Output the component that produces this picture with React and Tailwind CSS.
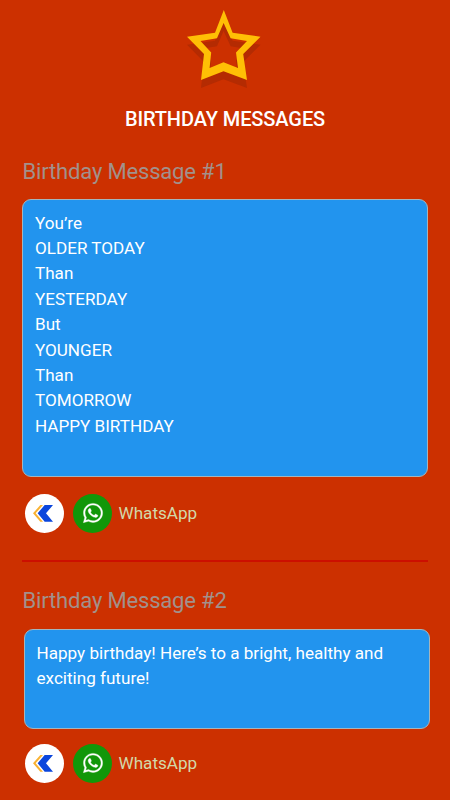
import React from 'react';
import { FaWhatsapp } from 'react-icons/fa';

const messages = [
  {
    id: 1,
    lines: [
      'You’re',
      'OLDER TODAY',
      'Than',
      'YESTERDAY',
      'But',
      'YOUNGER',
      'Than',
      'TOMORROW',
      'HAPPY BIRTHDAY',
    ],
    box: 'mt-[13px] h-[278px] pl-[12px] pt-[10.6px]',
    share: 'mt-[17px]',
  },
  {
    id: 2,
    lines: ['Happy birthday! Here’s to a bright, healthy and exciting future!'],
    box: 'ml-[2px] mt-[14px] h-[100px] pl-[11.5px] pt-[11px]',
    share: 'mt-[15px]',
  },
];

const star =
  'M36.8 0 L45.6 22.7 L73.5 26.7 L56.2 44 L60 70 L36.5 61.3 L14 70 L17 44 L0 26.7 L28 22.7 Z M36.6 13 L30 28.3 L13.5 31 L24.2 42.5 L22.6 58 L36.5 52.3 L51 58 L49 42.5 L60 31 L43.6 28.3 Z';

const StarLogo = () => (
  <svg width="74" height="79" viewBox="0 0 74 79" className="mr-[3px] block">
    <path d={star} transform="translate(0 8)" fill="#b42b02" fillRule="evenodd" />
    <path d={star} fill="#ffbf05" fillRule="evenodd" />
  </svg>
);

const ArrowIcon = () => (
  <svg width="39" height="39" viewBox="0 0 117 117">
    <path d="M24 58 L46 33 H54 L32 58 L54 83 H46 Z" fill="#f9b233" />
    <path d="M38 58 L59 33 H84 L63 58 L84 83 H59 Z" fill="#0b46dc" />
  </svg>
);

const ShareRow = ({ className }) => (
  <div className={`flex items-center pl-[3px] ${className}`}>
    <button className="h-[39px] w-[39px] rounded-full bg-white">
      <ArrowIcon />
    </button>
    <button className="ml-[9px] flex h-[39px] w-[39px] items-center justify-center rounded-full bg-[#129709] pb-[1px] text-white">
      <FaWhatsapp size={22} className="stroke-white stroke-[8px]" />
    </button>
    <span className="ml-[6.5px] text-[17.1px] leading-[25px] text-[#d3d9a9]">WhatsApp</span>
  </div>
);

const MessageCard = ({ message }) => (
  <section>
    <h2 className="pl-[0.5px] text-[22px] leading-7 tracking-[-0.17px] text-[#a2918b]">
      Birthday Message #{message.id}
    </h2>
    <div
      className={`w-[406px] rounded-[9px] border border-[#a3b5bd] bg-[#2294ee] pr-[11.5px] text-[17.1px] leading-[25.4px] text-white ${message.box}`}
    >
      {message.lines.map((line, i) => (
        <p key={i}>{line}</p>
      ))}
    </div>
    <ShareRow className={message.share} />
  </section>
);

export default function App() {
  return (
    <div className="h-[800px] w-[450px] overflow-hidden bg-[#cc3000] font-['Roboto',sans-serif]">
      <header className="flex flex-col items-center pt-[10px]">
        <StarLogo />
        <h1 className="mt-4 text-[20px] font-medium leading-7 tracking-[-0.1px] text-white">BIRTHDAY MESSAGES</h1>
      </header>

      <main className="pl-[22px] pt-[25px]">
        <MessageCard message={messages[0]} />
        <hr className="mb-[25px] mt-[27px] w-[406px] border-t-2 border-[#cc0f00]" />
        <MessageCard message={messages[1]} />
      </main>
    </div>
  );
}
